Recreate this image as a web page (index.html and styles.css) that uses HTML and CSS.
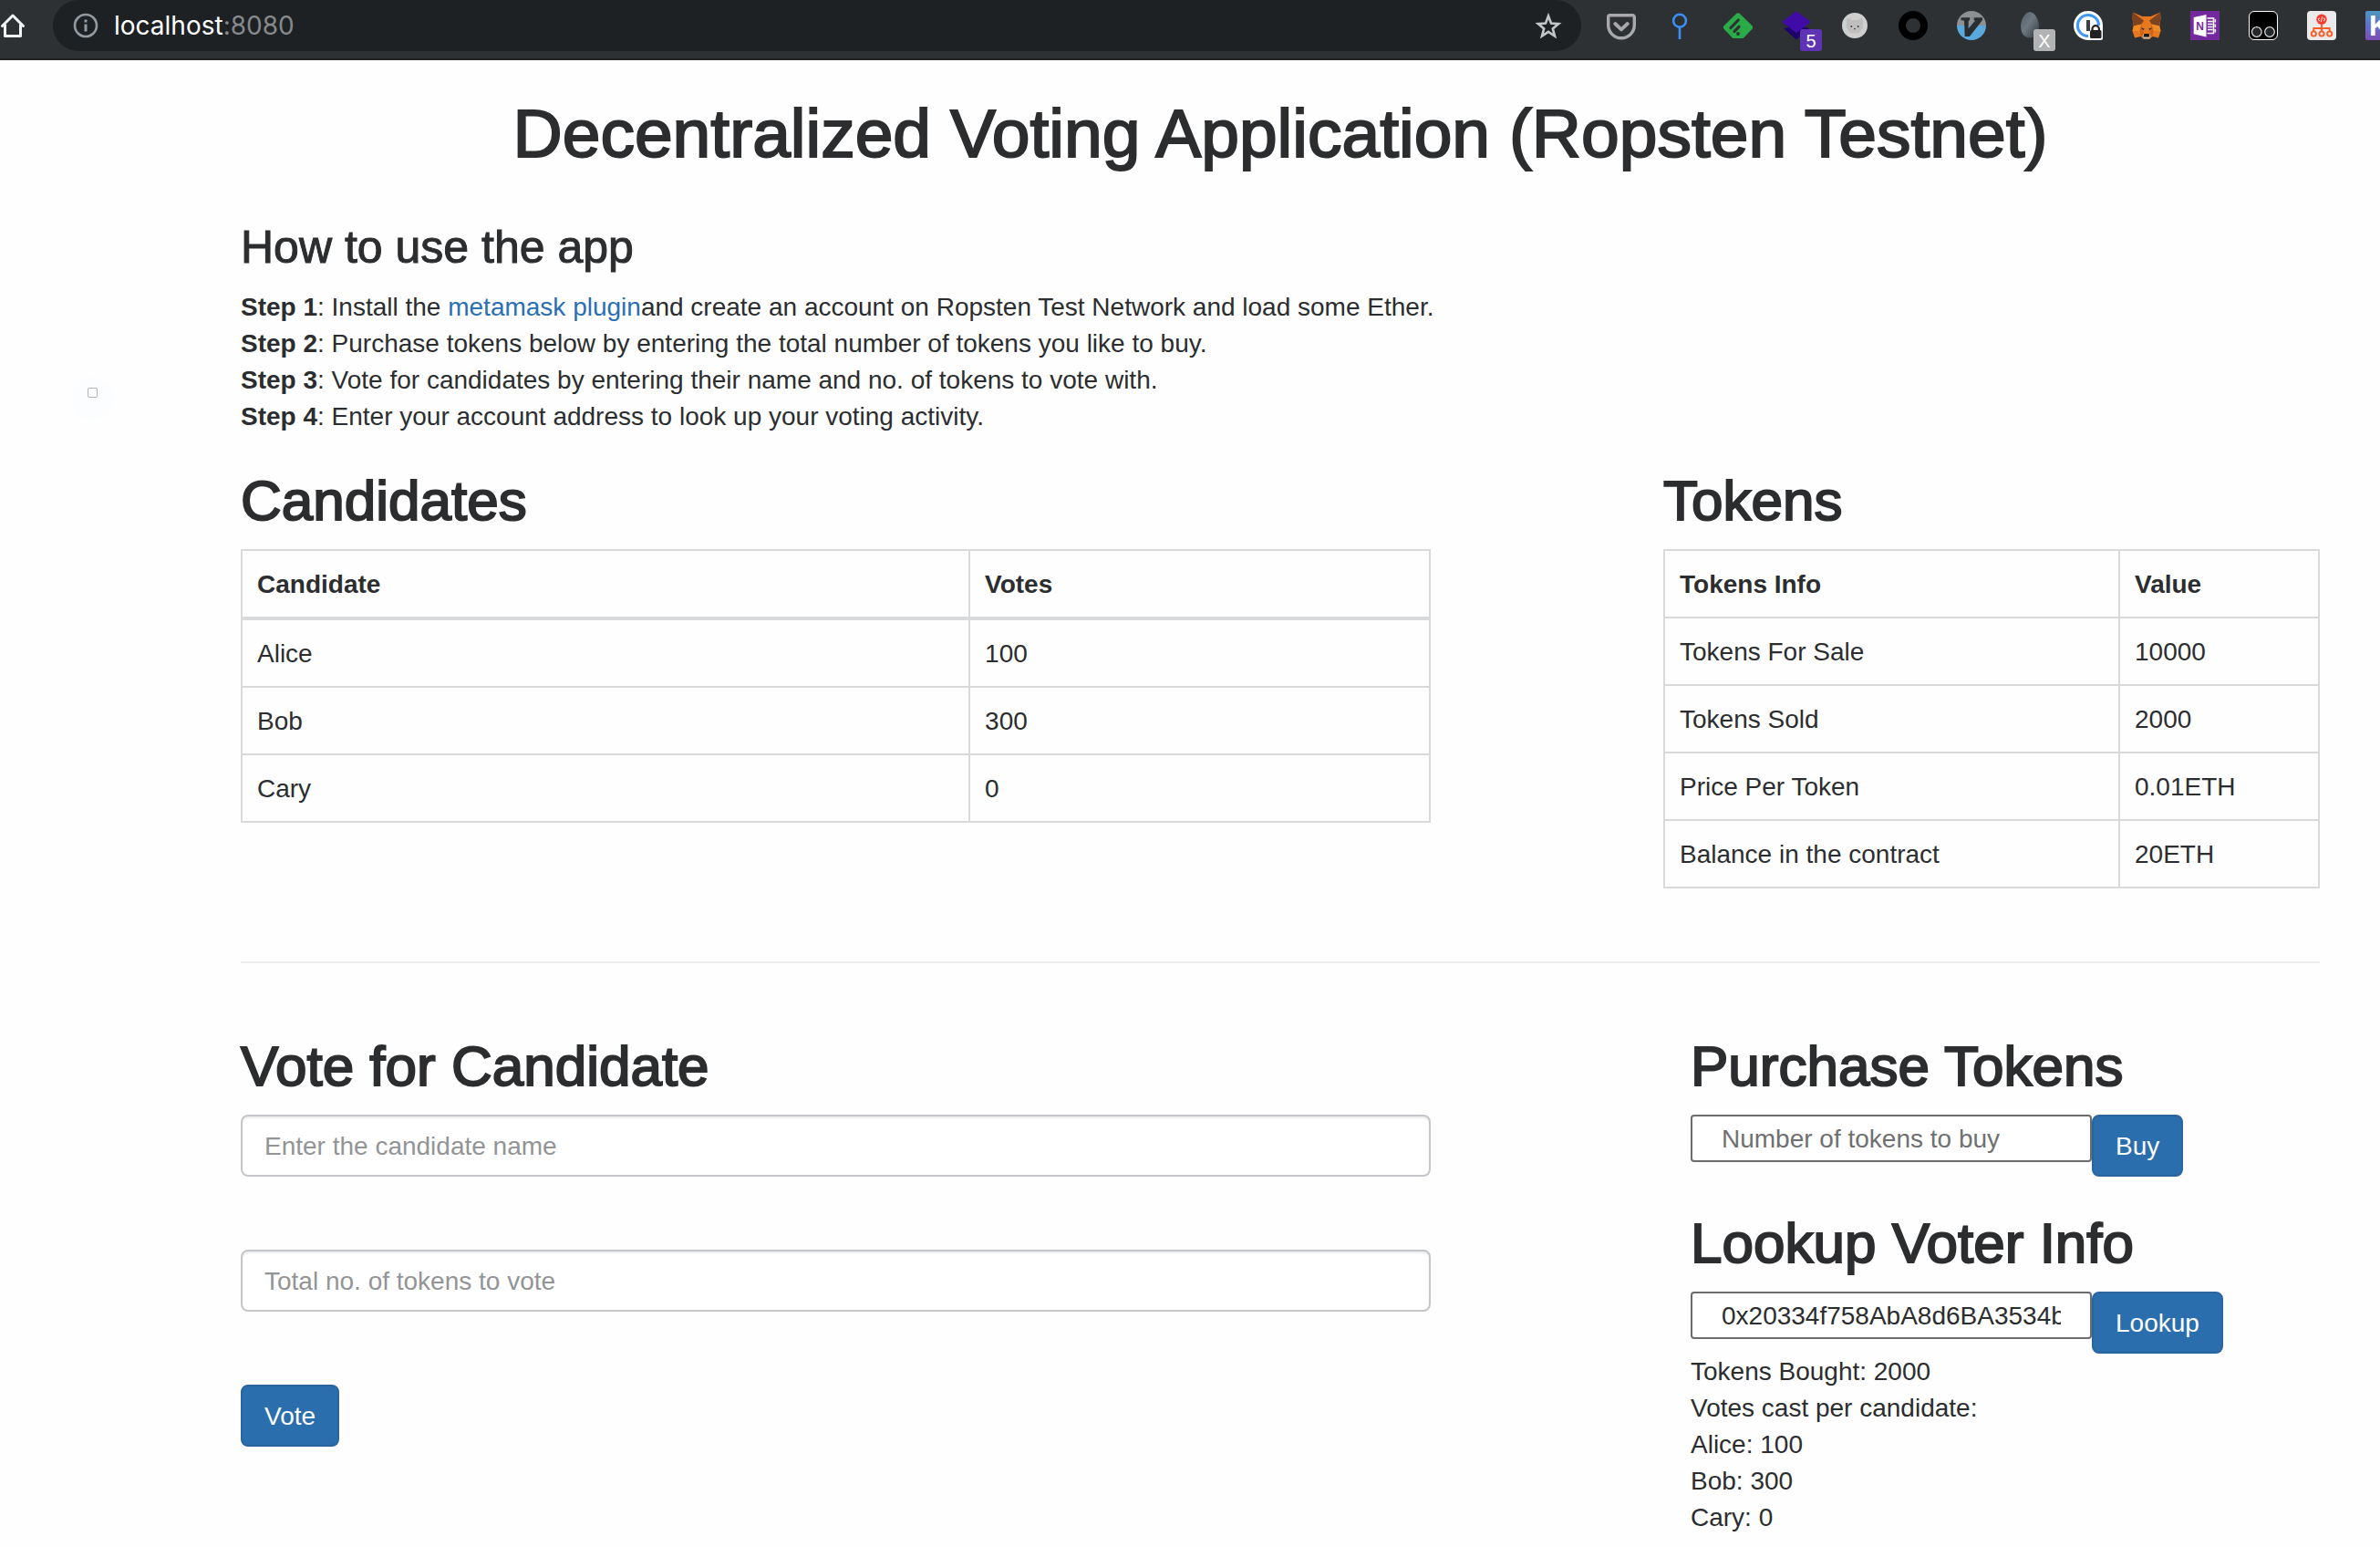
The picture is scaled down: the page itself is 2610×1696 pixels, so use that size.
FILE: index.html
```html
<!DOCTYPE html>
<html lang="en">
<head>
<meta charset="utf-8">
<title>Decentralized Voting Application</title>
<link rel="stylesheet" href="styles.css">
</head>
<body>
<header class="toolbar">
  <button class="icon-button home" type="button" aria-label="Home">
    <svg viewBox="0 0 28 32" width="28" height="32" fill="none" stroke="#f1f3f4" stroke-width="3" stroke-linecap="round" stroke-linejoin="round"><path d="M2.5 16.5 14 5l11.500 11.500M5.500 15v12.500h17V15"/></svg>
  </button>
  <div class="address">
    <svg viewBox="0 0 28 28" width="28" height="28" aria-hidden="true"><circle cx="14" cy="14" r="12" fill="none" stroke="#929ba2" stroke-width="2.600"/><path d="M12.500 7.500h3v3h-3zM12.500 12.500h3v8h-3z" fill="#929ba2"/></svg>
    <span class="url"><span class="host">localhost</span>:8080</span>
    <button class="icon-button" type="button" aria-label="Bookmark this page">
      <svg viewBox="0 0 32 32" width="32" height="32" fill="none" stroke="#c3c5c6" stroke-width="2.600"><path d="m16 5.500 3 8 8.200.600-6.400 5.300 2.200 8.100-7-4.600-7 4.600 2.200-8.100-6.400-5.300 8.200-.600z"/></svg>
    </button>
  </div>
  <nav class="extensions" aria-label="Extensions">
    <button class="icon-button" type="button" aria-label="Save to Pocket">
      <svg viewBox="0 0 32 32" width="32" height="32" fill="none" stroke="#a9a9ab" stroke-width="3.400" stroke-linejoin="round"><path d="M3.500 4.800h25a1.800 1.800 0 0 1 1.800 1.800V15.500a14.300 14.300 0 0 1-28.600 0V6.600a1.800 1.800 0 0 1 1.800-1.800z"/><path d="m9.300 14 6.700 6.300 6.700-6.300" stroke-width="3.800" stroke-linecap="round"/></svg>
    </button>
    <button class="icon-button" type="button" aria-label="Pin">
      <svg viewBox="0 0 32 32" width="32" height="32" fill="none" stroke="#3b8ff3" stroke-width="2.600"><circle cx="16" cy="10.700" r="6.900"/><path d="M16 18v13"/></svg>
    </button>
    <button class="icon-button" type="button" aria-label="Feed reader">
      <svg viewBox="0 0 32 32" width="32" height="32"><path d="M13.800 3.200a3.200 3.200 0 0 1 4.400 0l13 12.700a3 3 0 0 1 0 4.200l-8.500 9a3 3 0 0 1-2.200.900h-9a3 3 0 0 1-2.200-.900l-8.500-9a3 3 0 0 1 0-4.200z" fill="#2bab48"/><g stroke="#2d3134" stroke-width="3.200" stroke-linecap="round"><path d="m8 18.500 8.300-8.500M12 22.300l5-5"/></g><circle cx="16" cy="25" r="1.900" fill="#2d3134"/></svg>
    </button>
    <button class="icon-button" type="button" aria-label="Layers, 5">
      <svg viewBox="0 0 32 32" width="32" height="32"><path d="m2 19 14-3 14 3-14 12.500z" fill="#1d0069"/><path d="m16 .300 16 11.700-16 12L0 12z" fill="#400ba6"/></svg>
      <span class="badge badge-purple">5</span>
    </button>
    <button class="icon-button" type="button" aria-label="Cat">
      <svg viewBox="0 0 32 32" width="32" height="32"><circle cx="16" cy="16" r="14" fill="#cfcfd0"/><path d="M8 7.500 12.500 10h7L24 7.500c1 3 1 6 1 9.500-1 5-4 7.500-9 7.500S8 22 7 17c0-3.500 0-6.500 1-9.500z" fill="#bfbfc0"/><g fill="#333"><circle cx="12.300" cy="17" r=".9"/><circle cx="19.700" cy="17" r=".9"/><circle cx="16" cy="19.600" r=".8"/></g></svg>
    </button>
    <button class="icon-button" type="button" aria-label="Ring">
      <svg viewBox="0 0 32 32" width="32" height="32"><circle cx="16" cy="16" r="12" fill="none" stroke="#000" stroke-width="8"/></svg>
    </button>
    <button class="icon-button" type="button" aria-label="Vim keys">
      <svg viewBox="0 0 32 32" width="32" height="32"><path d="M0 16a16 16 0 0 1 32 0z" fill="#8d9092"/><path d="M0 16a16 16 0 0 0 32 0z" fill="#5aa9de"/><path d="M4.500 7.300h9.700V10l-1.500.800v8.500L20 10.800 18.700 10V7.300H28V10L14 28H8.700L8 10.800 4.500 10z" fill="#2b2e30"/></svg>
    </button>
    <button class="icon-button" type="button" aria-label="Egg, X">
      <svg viewBox="0 0 32 32" width="32" height="32"><defs><linearGradient id="egg" x1="0" y1="0" x2="1" y2="1"><stop offset="0" stop-color="#525d65"/><stop offset=".45" stop-color="#6d7880"/><stop offset="1" stop-color="#2f373c"/></linearGradient></defs><path d="M16 1c5.500 0 10 9 10 16s-4 12.500-10 12.500S6 24 6 17 10.500 1 16 1z" fill="url(#egg)"/></svg>
      <span class="badge badge-grey">X</span>
    </button>
    <button class="icon-button" type="button" aria-label="Password manager, locked">
      <svg viewBox="0 0 32 32" width="32" height="32"><path d="M16 0a16 16 0 0 1 16 16v13.500a2.500 2.500 0 0 1-2.500 2.500H16a16 16 0 0 1 0-32z" fill="#fff"/><path d="M27.600 16A11.600 11.600 0 1 0 16 27.600" fill="none" stroke="#3c98fb" stroke-width="3"/><path d="M14 10h4v12h-4z" fill="#3b4045"/><path d="M20.500 22v-2.200a3.700 3.700 0 0 1 7.400 0V22" fill="none" stroke="#222" stroke-width="2.200"/><rect x="18" y="21" width="12.500" height="9" rx="1.500" fill="#222"/></svg>
    </button>
    <button class="icon-button" type="button" aria-label="Fox wallet">
      <svg viewBox="0 0 32 32" width="32" height="32"><path d="M1 1.500 11.500 6h9L31 1.500 31.500 8l-1.300 9 1.300 5-2.500 7.500-6.500-1.500-3 2.500h-7L9.500 28 3 29.500.5 22l1.300-5L.5 8z" fill="#e8781f"/><path d="M1 1.500 13 10.500l-2.500 4L1.800 16.500.5 8zM31 1.500 19 10.500l2.500 4 8.700 2L31.500 8z" fill="#7d4321"/><path d="m1.800 16.500 8.700-2-2 7.500H.5zM30.200 16.500l-8.700-2 2 7.500h8z" fill="#f08a24"/><path d="m10.500 14.500 3 12L9.500 28l-1-6zM21.500 14.500l-3 12 4 1.500 1-6z" fill="#cf6418"/><path d="m9.500 18.500 4 .800-.6 1.900zM22.500 18.500l-4 .800.6 1.900z" fill="#263238"/><path d="m12 26 1.500-1h5l1.500 1-.500 4.500h-7z" fill="#cbbcaf"/><path d="M13.300 25h5.400l.5 3.500h-6.400z" fill="#161616"/></svg>
    </button>
    <button class="icon-button" type="button" aria-label="Note clipper">
      <svg viewBox="0 0 32 32" width="32" height="32"><path d="M0 0h32v32H0z" fill="#76289f"/><path d="M3.700 7 17.500 4v24.500L3.700 25.300z" fill="#fff"/><path d="M18.500 8h7v16.500h-7M19 11.500h5.500M19 14.500h5.500M19 17.500h5.500M19 20.500h5.500" fill="none" stroke="#fff" stroke-width="1.500"/><path d="M27.300 9v3.500m0 2V18m0 2v3.500" stroke="#fff" stroke-width="1.600"/><text x="6.200" y="20.500" class="glyph" font-size="12" fill="#76289f">N</text></svg>
    </button>
    <button class="icon-button" type="button" aria-label="User scripts">
      <svg viewBox="0 0 32 32" width="32" height="32"><rect x=".5" y=".5" width="31" height="31" rx="5.500" fill="#000" stroke="#fff"/><g fill="#24282a" stroke="#d8d8d8" stroke-width="1.300"><circle cx="8.800" cy="23" r="5.300"/><circle cx="23" cy="23" r="5.300"/></g></svg>
    </button>
    <button class="icon-button" type="button" aria-label="Source tree">
      <svg viewBox="0 0 32 32" width="32" height="32"><rect width="32" height="32" rx="4" fill="#ebebeb"/><g fill="none" stroke="#f95c25" stroke-width="1.900"><path d="M16 14v8M7.300 22v-3h17.400v3"/><circle cx="7.300" cy="25" r="2.600"/><circle cx="16" cy="25" r="2.600"/><circle cx="24.700" cy="25" r="2.600"/></g><circle cx="16" cy="9.300" r="5.700" fill="#f93b2b"/><path d="m14 7.500-2 1.800 2 1.800m4-3.600 2 1.800-2 1.800m-1.300-4.600-1.400 5.600" fill="none" stroke="#fff"/></svg>
    </button>
    <button class="icon-button" type="button" aria-label="K">
      <svg viewBox="0 0 32 32" width="32" height="32"><defs><linearGradient id="kgrad" x1="0" y1="0" x2="0" y2="1"><stop offset="0" stop-color="#4b97c4"/><stop offset="1" stop-color="#7c4bb8"/></linearGradient></defs><rect width="32" height="32" rx="2" fill="url(#kgrad)"/><text x="4" y="27" class="glyph" font-size="31" fill="#fff">K</text></svg>
    </button>
  </nav>
</header>

<main class="page">
  <span class="cursor-halo"></span>
  <h1>Decentralized Voting Application (Ropsten Testnet)</h1>

  <section class="how-to">
    <h3>How to use the app</h3>
    <p><strong>Step 1</strong>: Install the <a href="#">metamask plugin</a>and create an account on Ropsten Test Network and load some Ether.</p>
    <p><strong>Step 2</strong>: Purchase tokens below by entering the total number of tokens you like to buy.</p>
    <p><strong>Step 3</strong>: Vote for candidates by entering their name and no. of tokens to vote with.</p>
    <p><strong>Step 4</strong>: Enter your account address to look up your voting activity.</p>
  </section>

  <div class="row">
    <section class="col-main">
      <h2>Candidates</h2>
      <table class="table table-candidates">
        <thead><tr><th>Candidate</th><th>Votes</th></tr></thead>
        <tbody>
          <tr><td>Alice</td><td>100</td></tr>
          <tr><td>Bob</td><td>300</td></tr>
          <tr><td>Cary</td><td>0</td></tr>
        </tbody>
      </table>
    </section>
    <section class="col-side">
      <h2>Tokens</h2>
      <table class="table table-tokens">
        <tbody>
          <tr><th>Tokens Info</th><th>Value</th></tr>
          <tr><td>Tokens For Sale</td><td>10000</td></tr>
          <tr><td>Tokens Sold</td><td>2000</td></tr>
          <tr><td>Price Per Token</td><td>0.01ETH</td></tr>
          <tr><td>Balance in the contract</td><td>20ETH</td></tr>
        </tbody>
      </table>
    </section>
  </div>

  <hr class="divider">

  <div class="row">
    <form class="col-main">
      <h2>Vote for Candidate</h2>
      <div class="fields">
        <input class="form-control" type="text" placeholder="Enter the candidate name" aria-label="Candidate name">
        <input class="form-control" type="text" placeholder="Total no. of tokens to vote" aria-label="Tokens to vote">
        <button class="btn" type="button">Vote</button>
      </div>
    </form>
    <div class="col-side inset">
      <form>
        <h2>Purchase Tokens</h2>
        <div class="inline-form">
          <input class="plain-input" type="text" placeholder="Number of tokens to buy" aria-label="Number of tokens to buy">
          <button class="btn" type="button">Buy</button>
        </div>
      </form>
      <form>
        <h2>Lookup Voter Info</h2>
        <div class="inline-form">
          <input class="plain-input" type="text" value="0x20334f758AbA8d6BA3534bA" aria-label="Voter address">
          <button class="btn" type="button">Lookup</button>
        </div>
        <div>Tokens Bought: 2000</div>
        <div>Votes cast per candidate:</div>
        <div>Alice: 100</div>
        <div>Bob: 300</div>
        <div>Cary: 0</div>
      </form>
    </div>
  </div>
</main>
</body>
</html>
```
FILE: styles.css
```css
* { box-sizing: border-box; }

body {
  margin: 0;
  background: #fefefe;
  color: #2b2d2f;
  font: 28px/40px "Liberation Sans", Arial, sans-serif;
  overflow-x: hidden;
}

/* Browser toolbar */
.toolbar {
  display: flex;
  align-items: flex-start;
  height: 66px;
  background: #2d3134;
  border-bottom: 2px solid #222324;
  overflow: hidden;
}

.icon-button {
  position: relative;
  flex: none;
  padding: 0;
  border: 0;
  background: none;
}

.icon-button svg, .address svg { display: block; }

.home { margin: 12px 30px 0 0; }

.address {
  flex: 1;
  display: flex;
  align-items: center;
  height: 56px;
  padding: 0 20px 0 22px;
  border-radius: 28px;
  background: #1d2124;
}

.url {
  flex: 1;
  padding-left: 17px;
  color: #85898c;
  font: 28px/40px Inter, sans-serif;
}

.host { color: #fff; }

.extensions {
  display: flex;
  gap: 32px;
  margin: 12px -16px 0 28px;
}

.badge {
  position: absolute;
  left: 20px;
  top: 20px;
  width: 24px;
  height: 24px;
  border-radius: 3px;
  color: #fff;
  font: 20px/26px "Liberation Sans", Arial, sans-serif;
  text-align: center;
}

.badge-purple { background: #5e33b4; }
.badge-grey { background: #b1b3b5; }

.glyph { font-family: "Liberation Sans", Arial, sans-serif; font-weight: 700; }

/* Page */
.page {
  position: relative;
  padding: 40px 66px 0 264px;
}

.cursor-halo {
  position: absolute;
  left: 78px;
  top: 348px;
  width: 46px;
  height: 46px;
  border-radius: 50%;
  background: #fbfdfe;
}

.cursor-halo::before {
  content: "";
  position: absolute;
  left: 18px;
  top: 11px;
  width: 9px;
  height: 9px;
  border: 1px solid #b0b4b4;
  border-radius: 2px;
  background: #fff;
}

h1, h2, h3 { margin: 0; font-weight: 400; -webkit-text-stroke: 2px; }
h1 { font-size: 75px; line-height: 80px; text-align: center; }
h2 { margin-bottom: 20px; font-size: 62px; line-height: 66px; }
h3 { margin-bottom: 20px; font-size: 50px; line-height: 52px; -webkit-text-stroke-width: 1px; }
p { margin: 0; }
a { color: #2a6fb3; text-decoration: none; }

.how-to { margin: 59px 0 39px; }

.row {
  display: grid;
  grid-template-columns: repeat(12, 1fr);
  column-gap: 60px;
}

.col-main { grid-column: 1 / span 7; }
.col-side { grid-column: 9 / span 4; }
.inset { padding-left: 30px; }

.table {
  width: 100%;
  border-collapse: collapse;
  table-layout: fixed;
}

.table th, .table td {
  padding: 17px 16px 15px;
  border: 2px solid #d8d9da;
  text-align: left;
}

.table thead th { border-bottom-width: 4px; }
.table-candidates th:first-child { width: 61.25%; }
.table-tokens th:first-child { width: 69.5%; }

.divider {
  margin: 80px 0;
  border: 0;
  border-top: 2px solid #ececec;
}

.fields {
  display: flex;
  flex-direction: column;
  align-items: flex-start;
  gap: 80px;
}

.form-control {
  width: 100%;
  height: 68px;
  padding: 13px 24px 11px;
  border: 2px solid #c4c6c9;
  border-radius: 8px;
  background: #fff;
  box-shadow: inset 0 2px 2px #ebecef;
  color: inherit;
  font: inherit;
}

.form-control::placeholder { color: #929496; }

.btn {
  height: 68px;
  padding: 13px 24px 11px;
  border: 2px solid #2a65a0;
  border-radius: 8px;
  background: #2a6eae;
  color: #fff;
  font: inherit;
}

.inline-form { display: flex; align-items: flex-start; }
.inset form + form { margin-top: 40px; }

.plain-input {
  width: 440px;
  height: 52px;
  padding: 3px 32px 1px;
  border: 2px solid #6b6c6e;
  border-radius: 4px;
  background: #fff;
  color: inherit;
  font: inherit;
}

.plain-input::placeholder { color: #6f7072; }
```
